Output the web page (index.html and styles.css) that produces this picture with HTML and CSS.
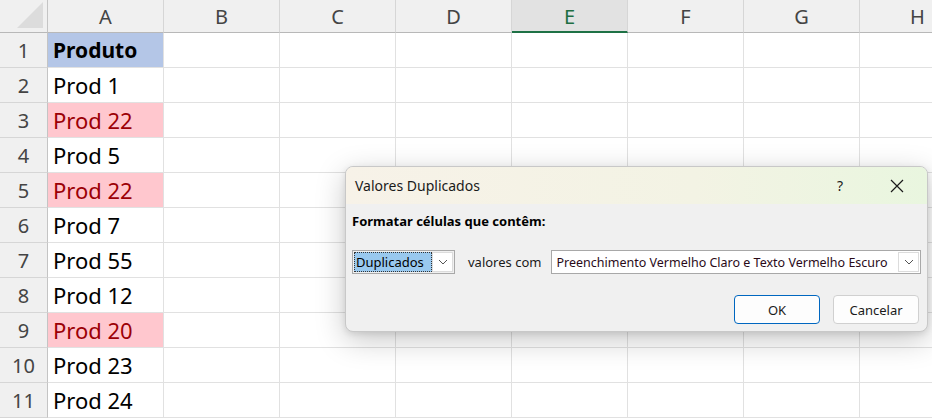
FILE: index.html
```html
<!DOCTYPE html>
<html>
<head>
<meta charset="utf-8">
<link rel="stylesheet" href="styles.css">
</head>
<body>
<div class="sheet">
  <div class="corner"><span class="tri"></span></div>
  <div class="ch">A</div><div class="ch">B</div><div class="ch">C</div><div class="ch">D</div>
  <div class="ch sel">E</div><div class="ch">F</div><div class="ch">G</div><div class="ch">H</div>

  <div class="rh">1</div><div class="c hdr">Produto</div><div class="c"></div><div class="c"></div><div class="c"></div><div class="c"></div><div class="c"></div><div class="c"></div><div class="c"></div>
  <div class="rh">2</div><div class="c">Prod 1</div><div class="c"></div><div class="c"></div><div class="c"></div><div class="c"></div><div class="c"></div><div class="c"></div><div class="c"></div>
  <div class="rh">3</div><div class="c dup">Prod 22</div><div class="c"></div><div class="c"></div><div class="c"></div><div class="c"></div><div class="c"></div><div class="c"></div><div class="c"></div>
  <div class="rh">4</div><div class="c">Prod 5</div><div class="c"></div><div class="c"></div><div class="c"></div><div class="c"></div><div class="c"></div><div class="c"></div><div class="c"></div>
  <div class="rh">5</div><div class="c dup">Prod 22</div><div class="c"></div><div class="c"></div><div class="c"></div><div class="c"></div><div class="c"></div><div class="c"></div><div class="c"></div>
  <div class="rh">6</div><div class="c">Prod 7</div><div class="c"></div><div class="c"></div><div class="c"></div><div class="c"></div><div class="c"></div><div class="c"></div><div class="c"></div>
  <div class="rh">7</div><div class="c">Prod 55</div><div class="c"></div><div class="c"></div><div class="c"></div><div class="c"></div><div class="c"></div><div class="c"></div><div class="c"></div>
  <div class="rh">8</div><div class="c">Prod 12</div><div class="c"></div><div class="c"></div><div class="c"></div><div class="c"></div><div class="c"></div><div class="c"></div><div class="c"></div>
  <div class="rh">9</div><div class="c dup">Prod 20</div><div class="c"></div><div class="c"></div><div class="c"></div><div class="c"></div><div class="c"></div><div class="c"></div><div class="c"></div>
  <div class="rh">10</div><div class="c">Prod 23</div><div class="c"></div><div class="c"></div><div class="c"></div><div class="c"></div><div class="c"></div><div class="c"></div><div class="c"></div>
  <div class="rh">11</div><div class="c">Prod 24</div><div class="c"></div><div class="c"></div><div class="c"></div><div class="c"></div><div class="c"></div><div class="c"></div><div class="c"></div>
</div>

<div class="dialog">
  <div class="titlebar">
    <span class="title">Valores Duplicados</span>
    <span class="help">?</span>
    <span class="close">
      <svg width="14" height="14" viewBox="0 0 14 14"><path d="M1 1 L13 13 M13 1 L1 13" stroke="#1a1a1a" stroke-width="1.2" fill="none"/></svg>
    </span>
  </div>
  <div class="dbody">
    <div class="label">Formatar células que contêm:</div>
    <div class="row">
      <div class="combo small">
        <span class="seltext">Duplicados</span>
        <span class="arrow"><svg width="10" height="6" viewBox="0 0 10 6"><path d="M1 1 L5 5 L9 1" stroke="#555" stroke-width="1" fill="none"/></svg></span>
      </div>
      <span class="mid">valores com</span>
      <div class="combo wide">
        <span class="val">Preenchimento Vermelho Claro e Texto Vermelho Escuro</span>
        <span class="arrow"><svg width="10" height="6" viewBox="0 0 10 6"><path d="M1 1 L5 5 L9 1" stroke="#555" stroke-width="1" fill="none"/></svg></span>
      </div>
    </div>
    <div class="buttons">
      <button class="btn ok">OK</button>
      <button class="btn">Cancelar</button>
    </div>
  </div>
</div>
</body>
</html>
```

FILE: styles.css
```css
html, body {
  margin: 0;
  padding: 0;
  width: 932px;
  height: 418px;
  overflow: hidden;
  background: #ffffff;
  font-family: "Noto Sans", "Open Sans", sans-serif;
}

.sheet {
  display: grid;
  grid-template-columns: 48px repeat(8, 116px);
  grid-template-rows: 33px repeat(11, 35px);
  width: 976px;
}

.corner {
  background: #f0f0f0;
  border-right: 1px solid #c4c4c4;
  border-bottom: 1px solid #b8b8b8;
  box-sizing: border-box;
  position: relative;
}
.tri {
  position: absolute;
  right: 4px;
  bottom: 4px;
  width: 0;
  height: 0;
  border-left: 26px solid transparent;
  border-bottom: 26px solid #dcdcdc;
}

.ch {
  background: #f0f0f0;
  border-right: 1px solid #d6d6d6;
  border-bottom: 1px solid #b8b8b8;
  box-sizing: border-box;
  display: flex;
  align-items: center;
  justify-content: center;
  font-size: 20px;
  color: #444444;
  padding-top: 1px;
}
.ch.sel {
  background: #e2e2e2;
  color: #1e6e42;
  border-bottom: 2px solid #1e7145;
}

.rh {
  background: #f0f0f0;
  border-right: 1px solid #c4c4c4;
  border-bottom: 1px solid #d6d6d6;
  box-sizing: border-box;
  display: flex;
  align-items: center;
  justify-content: center;
  font-size: 20px;
  color: #444444;
}

.c {
  border-right: 1px solid #e1e1e1;
  border-bottom: 1px solid #e1e1e1;
  box-sizing: border-box;
  display: flex;
  align-items: center;
  padding-left: 5px;
  font-size: 22px;
  color: #000000;
  white-space: nowrap;
}
.c.hdr {
  background: #b4c6e7;
  font-weight: bold;
  font-size: 21px;
}
.c.dup {
  background: #ffc7ce;
  color: #9c0006;
}

.dialog {
  position: absolute;
  left: 345px;
  top: 166px;
  width: 583px;
  height: 166px;
  border: 1px solid #c8c8c8;
  border-radius: 8px;
  overflow: hidden;
  background: #f0f0f0;
  box-shadow: 0 8px 30px rgba(0, 0, 0, 0.22), 0 2px 6px rgba(0, 0, 0, 0.1);
  box-sizing: border-box;
  font-family: "Noto Sans", "Open Sans", sans-serif;
}

.titlebar {
  height: 37px;
  display: flex;
  align-items: center;
  background: linear-gradient(90deg, #f7f2e8 0%, #f3f3e4 60%, #e9f6df 100%);
  padding-left: 9px;
}
.title {
  font-size: 14px;
  color: #1a1a1a;
  flex: 1;
}
.help {
  font-size: 14px;
  color: #1a1a1a;
  width: 14px;
  margin-right: 39px;
}
.close {
  display: flex;
  align-items: center;
  margin-right: 23px;
}

.dbody {
  padding: 8px 7px 0 6px;
}
.label {
  font-size: 13px;
  line-height: 18px;
  font-weight: bold;
  color: #000;
  margin-bottom: 20px;
}

.row {
  display: flex;
  align-items: center;
}
.combo {
  flex-shrink: 0;
  height: 24px;
  border: 1px solid #a8a8a8;
  box-sizing: border-box;
  background: #ffffff;
  display: flex;
  align-items: center;
  padding: 1px;
}
.combo.small {
  width: 103px;
  background: #f0f0f0;
}
.seltext {
  background: #99c9ef;
  outline: 1px dotted #333;
  outline-offset: -1px;
  height: 20px;
  width: 78px;
  display: flex;
  align-items: center;
  padding-left: 2px;
  font-size: 13px;
  color: #000;
  box-sizing: border-box;
}
.arrow {
  margin-left: auto;
  width: 21px;
  height: 20px;
  border: 1px solid #dcdcdc;
  background: #ffffff;
  box-sizing: border-box;
  display: flex;
  align-items: center;
  justify-content: center;
}
.mid {
  flex-shrink: 0;
  white-space: nowrap;
  font-size: 13px;
  color: #1a1a1a;
  margin-left: 13px;
  margin-right: 10px;
}
.combo.wide {
  width: 370px;
}
.val {
  font-size: 12.5px;
  color: #2a0a18;
  padding-left: 3px;
  white-space: nowrap;
}

.buttons {
  display: flex;
  justify-content: flex-end;
  gap: 13px;
  margin-top: 21px;
  margin-right: 1px;
}
.btn {
  width: 86px;
  height: 29px;
  border: 1px solid #d0d0d0;
  border-radius: 4px;
  background: #fdfdfd;
  font-family: "Noto Sans", "Open Sans", sans-serif;
  font-size: 13px;
  color: #1a1a1a;
  padding: 0;
}
.btn.ok {
  border: 1px solid #0067c0;
}
```
